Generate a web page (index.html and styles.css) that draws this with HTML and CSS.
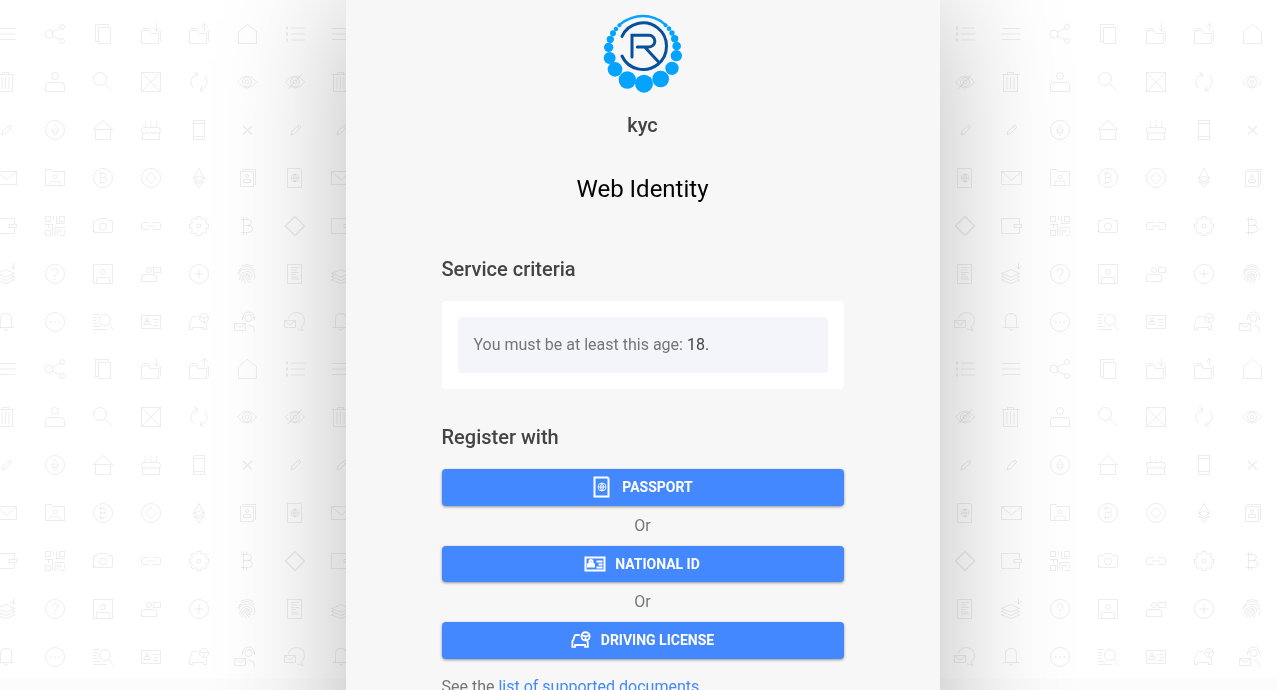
FILE: index.html
```html
<!DOCTYPE html>
<html lang="en">
<head>
<meta charset="utf-8">
<meta name="viewport" content="width=device-width, initial-scale=1">
<title>kyc - Web Identity</title>
<link rel="stylesheet" href="styles.css">
</head>
<body>
<svg class="backdrop" aria-hidden="true">
  <defs>
    <g id="passport"><path d="M-7.500-9.500H5.500L6.500-8.500V9.500H-7.500Z"/><g stroke-width=".8"><circle r="4"/><path d="M-4 0H4M0-4V4M0-4Q-3.500 0 0 4M0-4Q3.500 0 0 4"/></g></g>
    <g id="idcard"><path d="M-9.500-6.500H9.500V6.500H-9.500Z"/><circle cx="-4" cy="-2.500" r="1.500"/><path d="M-7 2.500V1Q-7-.5-5.500-.5H-2.500Q-1-.5-1 1V2.500ZM1.500-2.500H7.500M3.500.5H7.500M1.500 3.500H7.500"/></g>
    <g id="car"><path d="M-1.500-5.500H-5.500Q-6.500-5.500-7-4.500L-8.500 0L-9.500 1.500V7.500H-6.500V5.500H4.500V7.500H7.500V2.500L6.500 1"/><circle cx="5" cy="-4" r="4.500"/><path d="M1-5L5-4L9-5M5-4V0"/></g>
    <g id="menu"><path d="M-9-5.500H9.500M-9 0H9.500M-9 5.500H9.500"/></g>
    <g id="trash"><path d="M-7.500-7.500V9.500H6.500V-7.500M-9-7.500H8.500M-3.500-7.500V-9.500H2.500V-7.500M-4-5V7M-.5-5V7M3-5V7"/></g>
    <g id="pencil"><path d="M-5 5L-4 1L3-5L5-3L-1.500 3.500ZM1.500-3.500L3.500-1.500"/></g>
    <g id="mail"><path d="M-9.500-6.500H10.500V6.500H-9.500ZM-9-6L.5 2L10-6"/></g>
    <g id="pattern-bitcoin"><path d="M-3.500-6.500H1Q4.500-6.500 4.500-3.500T1-.5H-3.500M1-.5Q5.500-.5 5.500 3T1.500 6.500H-3.500M-3.500-9.500V9.500M-.5-9.500V-6.500M-.5 6.500V9.500M-6-6.500H-3.500M-6 6.500H-3.500"/></g>
    <g id="ether"><path d="M0-9.500L5.500.5L0 3.500L-5.500.5ZM-5.500.5L0-2L5.500.5M-5 3L0 9.500L5 3L0 5.500Z"/></g>
    <g id="eye"><path d="M-9.500 0Q0-12 9.500 0Q0 12-9.500 0Z"/><circle r="4.500"/><circle r="2"/></g>
    <g id="folder"><path d="M-9.500 9.500V-3.500H-3.500L-.5-.5H7.500V9.500ZM-8-5.500H-3L0-2.500M9.500 7.500V-2.500H8"/></g>
    <g id="person"><circle cy="-2" r="2.500"/><path d="M-6.500 9V5Q-6.500 3.500-5 3.500H5Q6.500 3.500 6.500 5V9"/></g>
    <pattern id="tile" x="-17" y="10" width="335" height="335" patternUnits="userSpaceOnUse">
      <g class="backdrop-lines">
        <use href="#menu" x="23" y="24"/>
        <g transform="translate(72 24)"><circle cx="-6" r="4"/><circle cx="7" cy="-7" r="2.500"/><circle cx="7" cy="7" r="2.500"/><path d="M-2.500-2L4.500-5.500M-2.500 2L4.500 5.500"/></g>
        <g transform="translate(120 24)"><path d="M-4.500-6.500H7.500V9.500H-4.500ZM-5 7.500H-7.500V-9.500H5.500V-8"/></g>
        <g transform="translate(168 24)"><use href="#folder"/><path d="M5.500-11V-3M2-6.500L5.500-3L9-6.500"/></g>
        <g transform="translate(216 24)"><use href="#folder"/><path d="M5.500-3V-10.500M2-7L5.500-10.500L9-7"/></g>
        <g transform="translate(264 24)"><path d="M-8.500 9.500V-2.500L.5-9.500L9.500-2.500V9.500Z"/></g>
        <g transform="translate(312 24)"><path d="M-4-6H10M-4 0H10M-4 6H10"/><path d="M-9-6H-7M-9 0H-7M-9 6H-7" stroke-width="3"/></g>

        <use href="#trash" x="23" y="72"/>
        <g transform="translate(72 72)"><circle cy="-6" r="3.500"/><path d="M-9.500 9.500V4Q-9.500.5-6 .5H6Q9.500.5 9.500 4V9.500Z"/></g>
        <g transform="translate(120 72)"><circle cx="-3" cy="-3" r="6.500"/><path d="M2 2L9 9"/></g>
        <g transform="translate(168 72)"><path d="M-9.500-9.500H9.500V9.500H-9.500ZL9.500 9.500M9.500-9.500L-9.500 9.500"/></g>
        <g transform="translate(216 72)"><path d="M-6 6Q-12-3-2-8M-5-10L-1-8L-3-4M6-6Q12 3 2 8M5 10L1 8L3 4"/></g>
        <use href="#eye" x="264" y="72"/>
        <g transform="translate(312 72)"><use href="#eye"/><path d="M-7 7L7-8"/></g>

        <use href="#pencil" x="24" y="120"/>
        <g transform="translate(72 120)"><circle r="9.500"/><use href="#ether" transform="scale(.62)"/></g>
        <g transform="translate(120 120)"><path d="M-9.500-.5L0-9.500L9.500-.5ZM-7.500 0V9.500H7.500V0"/></g>
        <g transform="translate(168 120)"><path d="M-8.500 3V9.500H8.500V3M-7-2.500H7Q9.500-2.500 9.500.5T7 3.500Q5 3.500 4 2Q2 5 0 2Q-2 5-4 2Q-5 3.500-7 3.500T-9.500.5T-7-2.500ZM-5.500-6V-3M0-6V-3M5.500-6V-3M-5.500-9.500V-7.500M0-9.500V-7.500M5.500-9.500V-7.500"/></g>
        <g transform="translate(216 120)"><path d="M-5.500-9.500H5.500V9.500H-5.500ZM-5.500-6.500H5.500M-5.500 6.500H5.500"/></g>
        <g transform="translate(264 120)"><path stroke-width="1.500" d="M-4-4L5 4.500M5-4L-4 4.500"/></g>
        <use href="#pencil" x="313" y="120"/>

        <use href="#mail" x="23" y="168"/>
        <g transform="translate(72 168)"><path d="M-9.500 7.500V-8.500H-4L-2-6.500H9.500V7.500Z"/><use href="#person" transform="translate(0 .5) scale(.8)"/></g>
        <g transform="translate(120 168)"><circle r="9.500"/><use href="#pattern-bitcoin" transform="scale(.7)"/></g>
        <g transform="translate(168 168)"><circle r="9.500"/><path d="M0-5.500L5.500 0L0 5.500L-5.500 0Z"/></g>
        <use href="#ether" x="216" y="168"/>
        <g transform="translate(264 168)"><path d="M-6.500-6.500H6.500V8.500H-6.500ZM-5-8.500H8.500V7"/><circle cy="-2" r="1.500"/><path d="M-3.500 4.500V2.500Q-3.500 1.500-2.500 1.500H2.500Q3.500 1.500 3.500 2.500V4.500Z"/></g>
        <use href="#passport" x="312" y="168"/>

        <g transform="translate(23 216)"><path d="M-9.500-7.500H8.500V-2M8.500 2V7.500H-9.500V-7.500M3-1.500H10.500V1.500H3Z"/></g>
        <g transform="translate(72 216)"><path d="M-9.500-9.500H-4.500V-4.500H-9.500ZM4.500-9.500H9.500V-4.500H4.500ZM-9.500 4.500H-4.500V9.500H-9.500ZM-1.500-10V-6M1.500-10V-2M-10-1.500H-2.500V9.500M-6.500-1.500V2M0 .5V10M1 1.500H10M2-2.500H10M2.500 9.500V4.500H5.500V6.500M5 9.500H10M9.500 4V7.500"/></g>
        <g transform="translate(120 216)"><path d="M-9.500 6V-4Q-9.500-5.500-8-5.500H-5.500L-3.500-7.500H3.500L5.500-5.500H8Q9.500-5.500 9.500-4V5Q9.500 6.500 8 6.500H-8Q-9.500 6.500-9.500 5Z"/><circle cy=".5" r="3.500"/></g>
        <g transform="translate(168 216)"><path d="M-2-3.500H-7.500Q-9.500-3.500-9.500-1.500V1.500Q-9.500 3.500-7.500 3.500H-2M2-3.500H7.500Q9.500-3.500 9.500-1.500V1.500Q9.500 3.500 7.500 3.500H2M-4 0H4"/></g>
        <g transform="translate(216 216)"><path d="M-2-7.500V-9.500H2V-7.500L4-6.500L6-8L8-6L6.500-4L7.500-2H9.500V2H7.500L6.500 4L8 6L6 8L4 6.500L2 7.500V9.500H-2V7.500L-4 6.500L-6 8L-8 6L-6.500 4L-7.500 2H-9.500V-2H-7.500L-6.500-4L-8-6L-6-8L-4-6.500Z"/><circle r="2"/></g>
        <use href="#pattern-bitcoin" x="264" y="216"/>
        <g transform="translate(312 216)"><path stroke-width="1.500" d="M0-9.500L9.500 0L0 9.500L-9.500 0Z"/></g>

        <g transform="translate(23 264)"><path d="M-9.500-.5L0-4.500L8.500-.5L0 3ZM-7 1.500L-9.500 2.500L0 6.500L8.500 2.500L6 1.500M-7 5L-9.500 6L0 9.500L8.500 6L6 5M7.500-11V-5M4.500-8L7.500-5L10.500-8"/></g>
        <g transform="translate(72 264)"><circle r="9.500"/><path d="M-3-2.500Q-3-5.500 0-5.500T3-2.500Q3-1 1.500 0T0 3M0 4.500V6"/></g>
        <g transform="translate(120 264)"><path d="M-9.500-9.500H9.500V9.500H-9.500Z"/><use href="#person"/></g>
        <g transform="translate(168 264)"><circle cx="-2" cy="-4" r="2.500"/><path d="M-9.500 7.500V3Q-9.500.5-7 .5H3Q5.500.5 5.500 3V7.500ZM2.500-6.500H9.500V-1.500H2.500Z"/></g>
        <g transform="translate(216 264)"><circle r="9.500"/><path d="M-4.500 0H4.500M0-4.500V4.500"/></g>
        <g transform="translate(264 264)"><path d="M-6-8Q0-11 6-8M-8-4Q0-11 8-4M-8.500 1Q-7-5 0-5T8 2Q8 5 6 6M-7.500 6Q-7-2 0-2.500Q5-2 5 2Q4 5 2 3Q1 0-1 1Q-2 6 3 8.500M-5 8.500Q-6 0 0-.5Q3 0 2.500 2M-1 9.500Q-4 6-3 2M4 6Q1 6 .5 3M-9-1Q-8-4-6-5"/></g>
        <g transform="translate(312 264)"><path d="M-7.500-9.500H6.500V9.500H-7.500ZM-4-6.500H4M-4-4H2M-4-1.500H4M-4 .5H1M-4 3H3M-4 5H4"/></g>

        <g transform="translate(23 312)"><path d="M-8.500 5.500H8M-5.500 5.500V-3Q-5.500-8.500 0-8.500T5.500-3V5.500M-2 6.500Q0 10 2 6.500"/></g>
        <g transform="translate(72 312)"><circle r="9.500"/><path stroke-width="1.500" d="M-5 0H-3.500M-.8 0H.8M3.500 0H5"/></g>
        <g transform="translate(120 312)"><circle cx="2" cy="-2" r="5.500"/><path d="M6 2L10 8M-10-7.500H-4M-10-4.500H-6M-10-1.500H-7M-10 1.500H-6M-10 4.500H-3M-10 7.500H4"/></g>
        <use href="#idcard" x="168" y="312"/>
        <use href="#car" x="216" y="312"/>
        <g transform="translate(264 312)"><path d="M-12.500 1.500H-1.500V8.500H-12.500ZM-12 2L-7 5.500L-2 2M-4-4Q-4-10 1.500-10T7-4M2 3.500Q7.500 3 7.500 10M-4.500-5V-2M7.500-5V-2"/><circle cx="1.500" cy="-4" r="3.500"/></g>
        <g transform="translate(312 312)"><path d="M-10.500-1.500H.5V5.500H-10.500ZM-10-1L-5 3L0-1M-7-3Q-5-9.500 2-9.500Q9.500-8.500 9.500-1Q9.500 3 6 5L8 8.500L2 7"/></g>
      </g>
    </pattern>
  </defs>
  <rect width="100%" height="100%" fill="url(#tile)"/>
</svg>
<div class="bottom-strip"></div>

<div class="page">
  <main class="panel">
    <header class="brand">
      <svg class="logo" viewBox="40 42 240 240" role="img" aria-label="kyc logo">
        <g fill="#04a3ff">
          <circle cx="163" cy="251" r="27"/><circle cx="213" cy="237" r="25"/><circle cx="247" cy="205" r="20"/><circle cx="260" cy="167" r="17"/><circle cx="261" cy="138" r="13"/><circle cx="255" cy="116" r="11"/><circle cx="247" cy="99" r="8"/><circle cx="238" cy="86" r="7"/><circle cx="228" cy="76" r="6"/>
          <circle cx="113" cy="240" r="26"/><circle cx="76" cy="208" r="22"/><circle cx="60" cy="174" r="18"/><circle cx="57" cy="142" r="14"/><circle cx="62" cy="118" r="11"/><circle cx="70" cy="100" r="9"/><circle cx="79" cy="87" r="7"/><circle cx="89" cy="76" r="6"/>
        </g>
        <path d="M91 73Q123 48 160 48T226 73" fill="none" stroke="#04a3ff" stroke-width="7"/>
        <path d="M97 109A70 70 0 1 1 97 168M127 171V106H178A17 17 0 0 1 178 141H143M165 141L204 183" fill="none" stroke="#07509c" stroke-width="9" stroke-linecap="round"/>
      </svg>
      <h2 class="brand-name">kyc</h2>
    </header>
    <h1 class="title">Web Identity</h1>

    <section>
      <h3 class="section-title">Service criteria</h3>
      <div class="card">
        <p class="criterion">You must be at least this age: <span class="value">18.</span></p>
      </div>
    </section>

    <section class="register">
      <h3 class="section-title">Register with</h3>
      <button class="choice" type="button"><svg class="choice-icon" viewBox="-10 -10 20 20" aria-hidden="true"><use href="#passport"/></svg>PASSPORT</button>
      <p class="or">Or</p>
      <button class="choice" type="button"><svg class="choice-icon" viewBox="-10 -10 20 20" aria-hidden="true"><use href="#idcard"/><path class="solid" d="M-7 3V1Q-7-1-4-1T-1 1V3Z"/></svg>NATIONAL ID</button>
      <p class="or">Or</p>
      <button class="choice" type="button"><svg class="choice-icon" viewBox="-11 -11 22 22" aria-hidden="true"><use href="#car"/></svg>DRIVING LICENSE</button>
      <p class="documents">See the <a href="#documents">list of supported documents</a></p>
    </section>
  </main>
</div>
</body>
</html>
```
FILE: styles.css
```css
* {
  box-sizing: border-box;
}

body {
  margin: 0;
  background: #fff;
  color: #757575;
  font-family: Roboto, "Liberation Sans", sans-serif;
  font-size: 16px;
  line-height: 24px;
}

h1, h2, h3, p {
  margin: 0;
}

.backdrop {
  position: fixed;
  inset: 0;
  width: 100%;
  height: 100%;
}

.backdrop-lines {
  fill: none;
  stroke: #000;
  stroke-opacity: 0.07;
}

.bottom-strip {
  position: fixed;
  inset: auto 0 0;
  height: 12px;
  background: #fcfcfc;
}

.page {
  position: relative;
  height: 100vh;
  padding-left: 8px;
  overflow: hidden auto;
  scrollbar-width: none;
}

.panel {
  max-width: 594px;
  margin: 0 auto;
  padding: 14px 96px 160px;
  background: #f7f7f7;
  box-shadow: 0 0 120px rgba(0, 0, 0, 0.27);
}

.brand {
  display: flex;
  flex-direction: column;
  align-items: center;
  gap: 15px;
}

.logo {
  width: 80px;
  height: 80px;
}

.brand-name,
.section-title {
  color: #444;
  font-size: 20px;
  font-weight: 500;
  line-height: 32px;
}

.title {
  margin: 32px 0 48px;
  color: #000;
  font-size: 24px;
  font-weight: 400;
  line-height: 32px;
  text-align: center;
}

.section-title {
  margin-bottom: 16px;
}

.card {
  padding: 16px;
  border-radius: 4px;
  background: #fff;
}

.criterion {
  padding: 16px;
  border-radius: 4px;
  background: #f4f5fa;
}

.value {
  color: #444;
}

.register {
  margin-top: 32px;
}

.choice {
  display: flex;
  align-items: center;
  justify-content: center;
  gap: 10px;
  width: 100%;
  padding: 6px 16px;
  border: 0;
  border-radius: 4px;
  background: #48f;
  box-shadow: 0 1px 3px rgba(0, 0, 0, 0.4);
  color: #fff;
  font: 700 14px/1.75 Roboto, "Liberation Sans", sans-serif;
  cursor: pointer;
}

.choice-icon {
  width: 20px;
  height: 20px;
  fill: none;
  stroke: #fff;
  stroke-width: 2;
  overflow: visible;
}

.solid {
  fill: #fff;
  stroke: none;
}

.or {
  line-height: 40px;
  text-align: center;
}

.documents {
  margin-top: 16px;
}

.documents a {
  color: #48f;
  text-decoration: none;
}
```
